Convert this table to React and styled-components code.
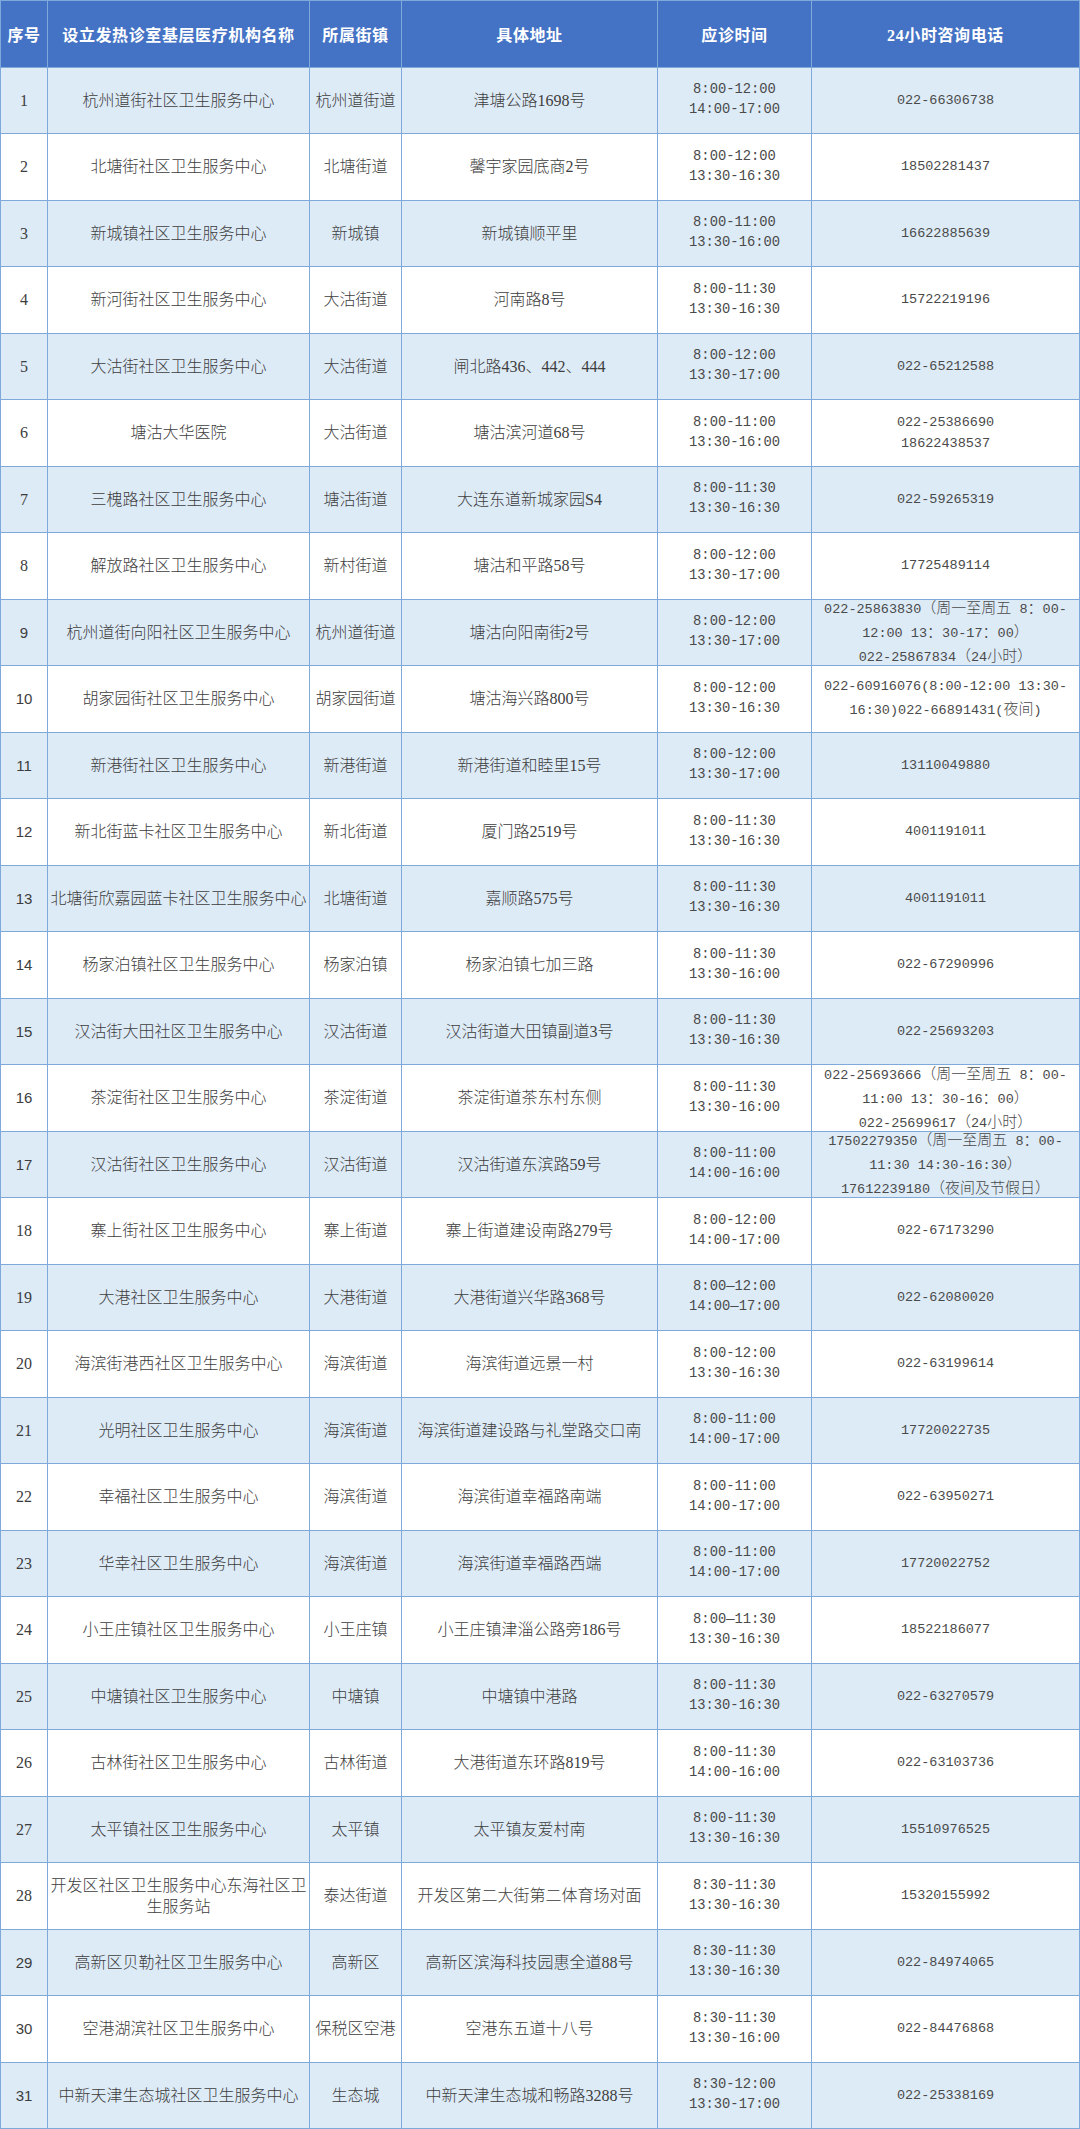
import React from 'react';
import styled, { createGlobalStyle, css } from 'styled-components';

const GlobalStyle = createGlobalStyle`
  html, body {
    margin: 0;
    padding: 0;
    background: #ffffff;
  }
  body {
    font-family: "Liberation Serif", "Noto Sans CJK SC", serif;
    color: #3d3d3d;
  }
`;

const Sheet = styled.div`
  display: grid;
  grid-template-columns: 46px 261px 91px 255px 153px 1fr;
  grid-auto-rows: 65.5px;
  gap: 1px;
  padding: 1px;
  background: #7ea9da;
  width: 1080px;
  box-sizing: border-box;
`;

const HeadCell = styled.div`
  background: #4472c4;
  color: #ffffff;
  display: flex;
  align-items: center;
  justify-content: center;
  font-family: "Liberation Serif", "Noto Sans CJK SC", serif;
  font-weight: 700;
  font-size: 16px;
  letter-spacing: 0.6px;
  white-space: nowrap;
`;

const Cell = styled.div`
  background: ${p => (p.$shade ? '#ddebf7' : '#ffffff')};
  display: flex;
  flex-direction: column;
  align-items: center;
  justify-content: center;
  text-align: center;
  padding: 0 2px;
  font-family: "Liberation Serif", "Noto Sans CJK SC", serif;
  font-weight: 300;
  font-size: 16px;
  line-height: 21px;
  color: #3d3d3d;
`;

const IndexCell = styled(Cell)`
  ${p => p.$sans && css`
    font-family: "Liberation Sans", Arial, sans-serif;
    font-size: 15px;
    font-weight: 400;
  `}
`;

const TimeCell = styled(Cell)`
  font-family: "Liberation Mono", "Noto Sans CJK SC", monospace;
  font-weight: 400;
  font-size: 13.8px;
  line-height: 20px;
  color: #4a4a4a;
  white-space: nowrap;
`;

const PhoneCell = styled(Cell)`
  font-family: "Liberation Mono", "Noto Sans CJK SC", monospace;
  font-weight: 400;
  font-size: 13.5px;
  line-height: 21px;
  color: #4a4a4a;
  white-space: nowrap;
`;

const Line = styled.div``;

const Wide = styled.span`
  font-family: "Noto Sans CJK SC", sans-serif;
  font-weight: 300;
  font-size: 15px;
`;

const headers = ['序号', '设立发热诊室基层医疗机构名称', '所属街镇', '具体地址', '应诊时间', '24小时咨询电话'];

const rows = [
  [1, '杭州道街社区卫生服务中心', '杭州道街道', '津塘公路1698号', ['8:00-12:00', '14:00-17:00'], ['022-66306738']],
  [2, '北塘街社区卫生服务中心', '北塘街道', '馨宇家园底商2号', ['8:00-12:00', '13:30-16:30'], ['18502281437']],
  [3, '新城镇社区卫生服务中心', '新城镇', '新城镇顺平里', ['8:00-11:00', '13:30-16:00'], ['16622885639']],
  [4, '新河街社区卫生服务中心', '大沽街道', '河南路8号', ['8:00-11:30', '13:30-16:30'], ['15722219196']],
  [5, '大沽街社区卫生服务中心', '大沽街道', '闸北路436、442、444', ['8:00-12:00', '13:30-17:00'], ['022-65212588']],
  [6, '塘沽大华医院', '大沽街道', '塘沽滨河道68号', ['8:00-11:00', '13:30-16:00'], ['022-25386690', '18622438537']],
  [7, '三槐路社区卫生服务中心', '塘沽街道', '大连东道新城家园S4', ['8:00-11:30', '13:30-16:30'], ['022-59265319']],
  [8, '解放路社区卫生服务中心', '新村街道', '塘沽和平路58号', ['8:00-12:00', '13:30-17:00'], ['17725489114']],
  [9, '杭州道街向阳社区卫生服务中心', '杭州道街道', '塘沽向阳南街2号', ['8:00-12:00', '13:30-17:00'],
    ['022-25863830（周一至周五 8：00-', '12:00 13：30-17：00）', '022-25867834（24小时）']],
  [10, '胡家园街社区卫生服务中心', '胡家园街道', '塘沽海兴路800号', ['8:00-12:00', '13:30-16:30'],
    ['022-60916076(8:00-12:00 13:30-', '16:30)022-66891431(夜间)']],
  [11, '新港街社区卫生服务中心', '新港街道', '新港街道和睦里15号', ['8:00-12:00', '13:30-17:00'], ['13110049880']],
  [12, '新北街蓝卡社区卫生服务中心', '新北街道', '厦门路2519号', ['8:00-11:30', '13:30-16:30'], ['4001191011']],
  [13, '北塘街欣嘉园蓝卡社区卫生服务中心', '北塘街道', '嘉顺路575号', ['8:00-11:30', '13:30-16:30'], ['4001191011']],
  [14, '杨家泊镇社区卫生服务中心', '杨家泊镇', '杨家泊镇七加三路', ['8:00-11:30', '13:30-16:00'], ['022-67290996']],
  [15, '汉沽街大田社区卫生服务中心', '汉沽街道', '汉沽街道大田镇副道3号', ['8:00-11:30', '13:30-16:30'], ['022-25693203']],
  [16, '茶淀街社区卫生服务中心', '茶淀街道', '茶淀街道茶东村东侧', ['8:00-11:30', '13:30-16:00'],
    ['022-25693666（周一至周五 8：00-', '11:00 13：30-16：00）', '022-25699617（24小时）']],
  [17, '汉沽街社区卫生服务中心', '汉沽街道', '汉沽街道东滨路59号', ['8:00-11:00', '14:00-16:00'],
    ['17502279350（周一至周五 8：00-', '11:30 14:30-16:30）', '17612239180（夜间及节假日）']],
  [18, '寨上街社区卫生服务中心', '寨上街道', '寨上街道建设南路279号', ['8:00-12:00', '14:00-17:00'], ['022-67173290']],
  [19, '大港社区卫生服务中心', '大港街道', '大港街道兴华路368号', ['8:00—12:00', '14:00—17:00'], ['022-62080020']],
  [20, '海滨街港西社区卫生服务中心', '海滨街道', '海滨街道远景一村', ['8:00-12:00', '13:30-16:30'], ['022-63199614']],
  [21, '光明社区卫生服务中心', '海滨街道', '海滨街道建设路与礼堂路交口南', ['8:00-11:00', '14:00-17:00'], ['17720022735']],
  [22, '幸福社区卫生服务中心', '海滨街道', '海滨街道幸福路南端', ['8:00-11:00', '14:00-17:00'], ['022-63950271']],
  [23, '华幸社区卫生服务中心', '海滨街道', '海滨街道幸福路西端', ['8:00-11:00', '14:00-17:00'], ['17720022752']],
  [24, '小王庄镇社区卫生服务中心', '小王庄镇', '小王庄镇津淄公路旁186号', ['8:00—11:30', '13:30-16:30'], ['18522186077']],
  [25, '中塘镇社区卫生服务中心', '中塘镇', '中塘镇中港路', ['8:00-11:30', '13:30-16:30'], ['022-63270579']],
  [26, '古林街社区卫生服务中心', '古林街道', '大港街道东环路819号', ['8:00-11:30', '14:00-16:00'], ['022-63103736']],
  [27, '太平镇社区卫生服务中心', '太平镇', '太平镇友爱村南', ['8:00-11:30', '13:30-16:30'], ['15510976525']],
  [28, '开发区社区卫生服务中心东海社区卫生服务站', '泰达街道', '开发区第二大街第二体育场对面', ['8:30-11:30', '13:30-16:30'], ['15320155992']],
  [29, '高新区贝勒社区卫生服务中心', '高新区', '高新区滨海科技园惠全道88号', ['8:30-11:30', '13:30-16:30'], ['022-84974065']],
  [30, '空港湖滨社区卫生服务中心', '保税区空港', '空港东五道十八号', ['8:30-11:30', '13:30-16:00'], ['022-84476868']],
  [31, '中新天津生态城社区卫生服务中心', '生态城', '中新天津生态城和畅路3288号', ['8:30-12:00', '13:30-17:00'], ['022-25338169']],
];

// wrap runs of Chinese / full-width characters so they keep a full-size glyph
function mixed(text) {
  return text.split(/([\u3000-\u9fff\uff00-\uffef]+)/).map((part, i) =>
    /[\u3000-\u9fff\uff00-\uffef]/.test(part) ? <Wide key={i}>{part}</Wide> : part
  );
}

const sansIndex = n => (n >= 9 && n <= 17) || n >= 29;

export default function App() {
  return (
    <>
      <GlobalStyle />
      <Sheet>
        {headers.map(h => (
          <HeadCell key={h}>{h}</HeadCell>
        ))}
        {rows.map(([no, name, town, addr, times, phones]) => {
          const shade = no % 2 === 1;
          return (
            <React.Fragment key={no}>
              <IndexCell $shade={shade} $sans={sansIndex(no)}>{no}</IndexCell>
              <Cell $shade={shade}>{name}</Cell>
              <Cell $shade={shade}>{town}</Cell>
              <Cell $shade={shade}>{addr}</Cell>
              <TimeCell $shade={shade}>
                {times.map(t => <Line key={t}>{t}</Line>)}
              </TimeCell>
              <PhoneCell $shade={shade}>
                {phones.map(p => <Line key={p}>{mixed(p)}</Line>)}
              </PhoneCell>
            </React.Fragment>
          );
        })}
      </Sheet>
    </>
  );
}
